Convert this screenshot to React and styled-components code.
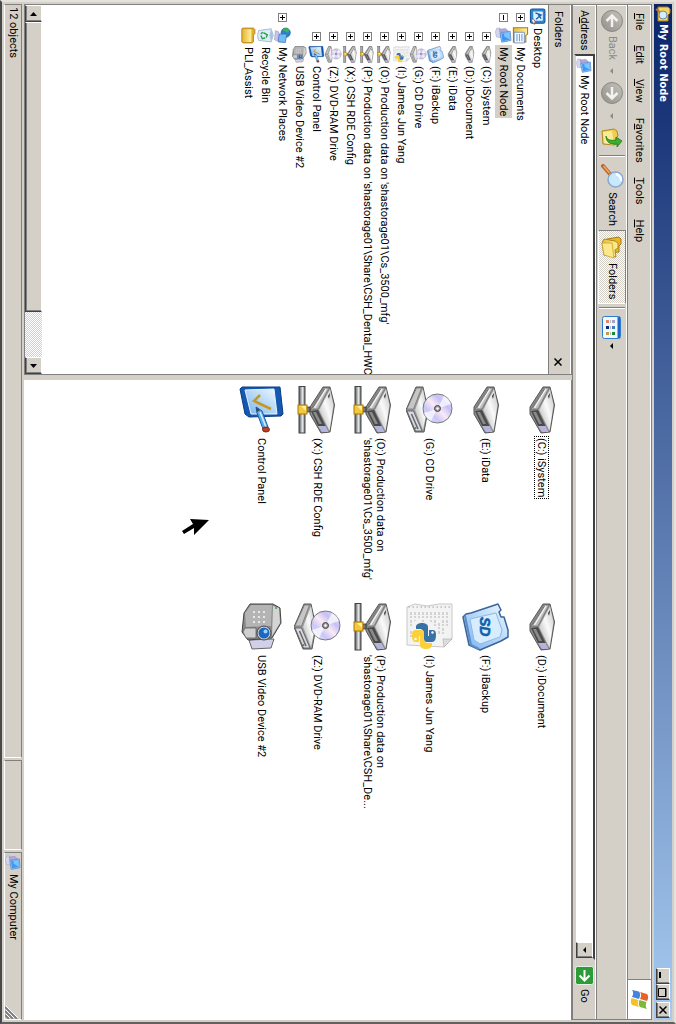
import React from "react";
import styled, { createGlobalStyle, css } from "styled-components";

const face = "#d4d0c8";
const shadow = "#808080";
const dark = "#404040";
const light = "#ffffff";

const raised = css`
  border: 1px solid;
  border-color: ${light} ${dark} ${dark} ${light};
  box-shadow: inset -1px -1px 0 ${shadow};
`;

const dither = css`
  background: repeating-conic-gradient(${face} 0 25%, #fff 0 50%) 0 0 / 2px 2px;
`;

const GlobalStyle = createGlobalStyle`
  *, *::before, *::after { box-sizing: border-box; }
  body { margin: 0; background: ${face}; }
  body, button, input { font: 11px/14px Roboto, Tahoma, sans-serif; color: #000; }
  button { padding: 0; border: 0; background: none; }
  ul { margin: 0; padding: 0; list-style: none; }
  svg { display: block; flex: none; }
`;

const Viewport = styled.div`
  height: 100vh;
  overflow: hidden;
`;

/* The desktop is shown on a display turned a quarter clockwise. */
const Screen = styled.div`
  width: 100vh;
  height: 100vw;
  transform-origin: 0 0;
  transform: rotate(90deg) translateY(-100%);
`;

const Window = styled.div`
  display: flex;
  flex-direction: column;
  height: 100%;
  padding: 2px;
  background: ${face};
  border: 2px solid;
  border-color: #e4e2dc #606060 #484848 #e4e2dc;
`;
const Bar = styled.div`
  display: flex;
  align-items: center;
  flex: none;
`;

const TitleBar = styled(Bar)`
  height: 18px;
  margin-bottom: 2px;
  padding: 0 2px;
  gap: 2px;
  color: #fff;
  font-family: "DejaVu Sans Condensed", Tahoma, sans-serif;
  font-weight: bold;
  background: linear-gradient(90deg, #0a246a, #a6caf0);
`;
const Title = styled.span`
  flex: 1;
`;
const Caption = styled.div`
  display: flex;
`;
const CaptionButton = styled.button`
  ${raised}
  display: grid;
  place-items: center;
  width: 16px;
  height: 14px;
  margin-left: ${(p) => (p.$apart ? "2px" : "0")};
  background: ${face};
`;

const MenuBar = styled(Bar)`
  height: 25px;
  gap: 1px;
  padding-left: 1px;
  border: 1px solid ${shadow};
  box-shadow: inset 1px 1px 0 ${light};
`;
const MenuButton = styled.button`
  padding: 0 7px;
  height: 20px;
`;
const Spacer = styled.div`
  flex: 1;
`;
const LogoBox = styled.div`
  display: grid;
  place-items: center;
  width: 40px;
  height: 100%;
  background: #fff;
  border-left: 1px solid ${shadow};
`;

const ToolBar = styled(Bar)`
  height: 31px;
  padding-left: 1px;
  border: 1px solid ${shadow};
  border-top: 0;
  box-shadow: inset 1px 1px 0 ${light};
`;
const ToolButton = styled.button`
  display: flex;
  align-items: center;
  gap: 4px;
  height: 28px;
  padding: 0 4px;
  color: ${(p) => (p.disabled ? "#8c8a84" : "#000")};
  ${(p) =>
    p.$pressed &&
    css`
      ${dither}
      border: 1px solid;
      border-color: ${shadow} ${light} ${light} ${shadow};
    `}
`;
const Arrow = styled.span`
  margin: 0 ${(p) => p.$gap || 0}px;
  border: 3px solid transparent;
  border-top-color: ${(p) => (p.$dim ? "#8c8a84" : "#000")};
  border-bottom: 0;
`;
const Separator = styled.div`
  width: 2px;
  height: 26px;
  margin: 0 3px;
  border-left: 1px solid ${shadow};
  border-right: 1px solid ${light};
`;

const AddressBar = styled(Bar)`
  height: 24px;
  padding-left: 5px;
  border: 1px solid ${shadow};
  border-top: 0;
  box-shadow: inset 1px 1px 0 ${light};
`;
const AddressLabel = styled.label`
  width: 44px;
`;
const Combo = styled.div`
  display: flex;
  align-items: center;
  flex: 1;
  height: 21px;
  padding-left: 2px;
  gap: 1px;
  background: #fff;
  border: 2px solid;
  border-color: ${dark} ${face} ${face} ${dark};
`;
const AddressInput = styled.input`
  flex: 1;
  min-width: 0;
  padding: 0;
  border: 0;
  outline: 0;
  background: none;
`;
const DropButton = styled.button`
  ${raised}
  display: grid;
  place-items: center;
  width: 16px;
  height: 17px;
  background: ${face};
`;
const GoButton = styled.button`
  display: flex;
  align-items: center;
  gap: 4px;
  width: 59px;
  padding-left: 6px;
`;

const Main = styled.main`
  display: flex;
  flex: 1;
  min-height: 0;
`;
const Folders = styled.section`
  display: flex;
  flex-direction: column;
  width: 371px;
  min-width: 0;
  border: 1px solid ${shadow};
  margin-right: 5px;
`;
const FoldersHead = styled.header`
  display: flex;
  align-items: center;
  justify-content: space-between;
  height: 23px;
  padding: 2px 6px 0;
  background: ${face};
  border-top: 1px solid ${light};
  border-bottom: 1px solid ${shadow};
`;
const CloseButton = styled.button`
  display: grid;
  place-items: center;
  width: 12px;
  height: 12px;
`;
const Tree = styled.ul`
  flex: 1;
  min-height: 0;
  padding: 2px 0;
  background: #fff;
  overflow: hidden;
`;
const TreeRow = styled.li`
  display: flex;
  align-items: center;
  height: 17px;
  padding-left: ${(p) => 3 + Math.max(0, p.$level - 1) * 19}px;
  white-space: nowrap;
`;
const Expander = styled.button`
  display: grid;
  place-items: center;
  width: 9px;
  height: 9px;
  margin: 0 5px;
  flex: none;
  border: 1px solid ${shadow};
  visibility: ${(p) => (p.$none ? "hidden" : "visible")};
`;
const TreeLabel = styled.span`
  height: 17px;
  line-height: 17px;
  margin-left: 1px;
  padding: 0 2px;
  background: ${(p) => (p.$selected ? face : "none")};
`;

const ScrollBar = styled.div`
  display: flex;
  height: 17px;
  flex: none;
  ${dither}
`;
const ScrollButton = styled.button`
  ${raised}
  display: grid;
  place-items: center;
  width: 17px;
  background: ${face};
`;
const Thumb = styled.div`
  ${raised}
  width: 290px;
  background: ${face};
`;
const Track = styled.div`
  flex: 1;
`;

const Items = styled.section`
  position: relative;
  flex: 1;
  min-width: 0;
  display: grid;
  grid-template-columns: 217px 217px;
  grid-auto-rows: 56px;
  align-content: start;
  padding: 1px 0 0 6px;
  background: #fff;
  border-top: 1px solid ${shadow};
`;
const Item = styled.div`
  display: flex;
  align-items: center;
  gap: 3px;
`;
const ItemLabel = styled.span`
  padding: 0 1px;
  line-height: 13px;
  white-space: nowrap;
  outline: ${(p) => (p.$focused ? "1px dotted #000" : "none")};
`;
const Line = styled.span`
  display: block;
`;
const Pointer = styled.svg`
  position: absolute;
  left: 139px;
  top: 362px;
`;

const StatusBar = styled.footer`
  display: flex;
  flex: none;
  gap: 2px;
  height: 20px;
  padding-top: 2px;
`;
const StatusCell = styled.div`
  display: flex;
  align-items: center;
  gap: 3px;
  width: ${(p) => (p.$width ? `${p.$width}px` : "auto")};
  flex: ${(p) => (p.$width ? "none" : 1)};
  padding-left: 2px;
  border: 1px solid;
  border-color: ${shadow} ${light} ${light} ${shadow};
`;

/* ---------- drawings ---------- */

const Gradients = styled.svg`
  position: absolute;
`;
const Defs = () => (
  <Gradients width="0" height="0" aria-hidden="true">
    <defs>
      <linearGradient id="metal" x1="0" y1="0" x2="1" y2="1">
        <stop offset="0" stopColor="#c2c2c2" />
        <stop offset=".45" stopColor="#fafafa" />
        <stop offset="1" stopColor="#a8a8a8" />
      </linearGradient>
      <linearGradient id="disc" x1="0" y1="0" x2="1" y2="1">
        <stop offset="0" stopColor="#f4f2ff" />
        <stop offset=".3" stopColor="#c4c0f4" />
        <stop offset=".5" stopColor="#fbeaf6" />
        <stop offset=".7" stopColor="#c8c6f8" />
        <stop offset="1" stopColor="#f6f6ff" />
      </linearGradient>
      <linearGradient id="sky" x1="0" y1="0" x2="1" y2="1">
        <stop offset="0" stopColor="#eef8ff" />
        <stop offset="1" stopColor="#7ab4ee" />
      </linearGradient>
      <linearGradient id="gold" x1="0" y1="0" x2="0" y2="1">
        <stop offset="0" stopColor="#fff2a0" />
        <stop offset="1" stopColor="#e6b83a" />
      </linearGradient>
      <linearGradient id="pipe" x1="0" y1="0" x2="0" y2="1">
        <stop offset="0" stopColor="#666" />
        <stop offset=".4" stopColor="#e4e8ec" />
        <stop offset="1" stopColor="#555" />
      </linearGradient>
      <linearGradient id="orb" x1="0" y1="0" x2="1" y2="1">
        <stop offset="0" stopColor="#c4c2bc" />
        <stop offset="1" stopColor="#92908a" />
      </linearGradient>
    </defs>
  </Gradients>
);

const DriveBody = () => (
  <g>
    <path d="M1 5 19 0.5 46 5 47 14 28 25 21 25 1 12Z" fill="#8d8d8d" stroke="#555" strokeWidth="1" strokeLinejoin="round" />
    <path d="M3 5 19 1.500 45 5.500 24 16Z" fill="url(#metal)" />
    <path d="M2 6 23 17 23 24 2 11Z" fill="#bdbdbd" stroke="#666" strokeWidth=".6" />
    <path d="M3 9 22 20.500" stroke="#f4f4f4" strokeWidth="1.400" />
    <path d="M3 10.500 22 22.500" stroke="#5e5e5e" strokeWidth=".8" />
    <path d="M24 17 40 9.500 40 17 25 24Z" fill="#4a4a4a" />
    <path d="M26 19 38 13 38 16 26 22Z" fill="#8a8a8a" />
    <path d="M40 9.500 46 6.500 46 13 40 17Z" fill="#b4b4dc" />
    <path d="M7 4.800 13 6 10 7Z" fill="#333" />
  </g>
);

const Drive = () => (
  <g transform="translate(0 11)">
    <DriveBody />
  </g>
);

const NetDrive = () => (
  <g transform="translate(0 7)">
    <DriveBody />
    <path d="M21 25h5v5h-5z" fill="#777" stroke="#333" strokeWidth=".8" />
    <rect x=".5" y="30" width="46.500" height="6" fill="url(#pipe)" stroke="#444" />
    <rect x="19" y="28" width="9" height="9" fill="#f4c838" stroke="#a87808" />
    <path d="M20 29h5l-5 5z" fill="#fff0a8" />
  </g>
);

const CdDrive = () => (
  <g transform="translate(0 1)">
    <g transform="translate(0 22)">
      <path d="M1 8 24 3 46 7 46 16 24 25 1 15Z" fill="#9a9a9a" stroke="#555" strokeLinejoin="round" />
      <path d="M3 8 24 4 44 8 24 16Z" fill="url(#metal)" />
      <path d="M2 9.500 23 17.500 23 24 2 14.500Z" fill="#c6c6c6" stroke="#666" strokeWidth=".6" />
      <path d="M25 17.500 45 9 45 15.500 25 24Z" fill="#d8d8e4" stroke="#555" strokeWidth=".8" />
      <path d="M28 19.500 43 13" stroke="#666" strokeWidth="1.500" />
      <circle cx="42" cy="15.500" r="1" fill="#2f9a3a" />
    </g>
    <circle cx="22.500" cy="15.500" r="14.500" fill="url(#disc)" stroke="#777" />
    <path d="M22.500 15.500 10 9A14 14 0 0 1 18 2Z" fill="#fff" opacity=".7" />
    <path d="M22.500 15.500 35 22A14 14 0 0 1 27 29Z" fill="#fff" opacity=".7" />
    <circle cx="22.500" cy="15.500" r="3" fill="#999" stroke="#444" />
    <circle cx="22.500" cy="15.500" r="1.200" fill="#fff" />
  </g>
);

const SdCard = () => (
  <g transform="translate(0 1)">
    <path d="M1 11 7 8 9 10 14 8 14 5 27 1 34 1 38 8 47 29 42 40 14 46 11 43 10 38Z" fill="url(#sky)" stroke="#3a649c" strokeWidth="1.500" strokeLinejoin="round" />
    <path d="M10 13 27 7 34 9 41 29 37 35 16 39Z" fill="#d8ecff" stroke="#8cb8e8" />
    <path d="M13 44 42 38 46 30" fill="none" stroke="#5b8cc8" strokeWidth="2" />
    <text x="14" y="29" fontFamily="Liberation Sans, sans-serif" fontSize="14" fontWeight="bold" fontStyle="italic" fill="#1060a8" stroke="#1060a8" strokeWidth=".6">SD</text>
  </g>
);

const PythonPaper = () => (
  <g transform="translate(0 1)">
    <path d="M1 1 36 1 44 9 42 46 4 46 1 38 3 26 1 14Z" fill="#f3f3f3" stroke="#c8c8c8" />
    <path d="M36 1 36 10 44 9Z" fill="#ddd" stroke="#aaa" strokeWidth=".6" />
    <path d="M4 3V45" stroke="#bbb" strokeWidth="1.500" strokeDasharray="1.500 2.500" />
    <path d="M9 6h14M9 10h22M9 14h8M20 14h12M9 18h16M9 22h10M9 26h8M9 30h10M9 34h6M9 38h9M9 42h14M28 42h8" stroke="#b4b4b4" strokeDasharray="3 1 2 2" />
    <path d="M32 17c-5 0-5 2-5 4v3h6v1h-9c-3 0-4 3-4 6s1 6 4 6h2v-4c0-2 2-4 4-4h6c2 0 3-1 3-3v-5c0-3-3-4-7-4z" fill="#3872a4" />
    <path d="M33 41c5 0 6-2 6-4v-3h-6v-1h9c3 0 4-3 4-6s-1-6-4-6h-2v4c0 2-2 4-4 4h-6c-2 0-3 1-3 3v5c0 3 2 4 6 4z" fill="#fdd03a" />
    <circle cx="29.500" cy="20.500" r="1.200" fill="#fff" />
    <circle cx="36" cy="37.500" r="1.200" fill="#fff" />
  </g>
);

const ControlPanel = () => (
  <g transform="translate(0 2)">
    <path d="M1 4 28 1 30 3 31 35 28 39 3 44 1 42Z" fill="#1458b0" stroke="#0c3c84" strokeLinejoin="round" />
    <path d="M3 10 28 7 28 33 4 39Z" fill="url(#sky)" stroke="#e8f4ff" />
    <path d="M9 24 15 30 23 13" fill="none" stroke="#c8981c" strokeWidth="2.500" />
    <path d="M21 28 25 22 41 16 43 21 27 27Z" fill="#5cacec" stroke="#1c5ca4" />
    <path d="M26 24 41 18" stroke="#d4f0ff" strokeWidth="1.500" />
    <path d="M21 28 24 24 26 27Z" fill="#444" />
    <ellipse cx="43.500" cy="18" rx="2.500" ry="3.500" fill="#c43c20" stroke="#7c2410" />
  </g>
);

const Camera = () => (
  <g transform="translate(0 4)">
    <path d="M36 8 45 11 46 30 37 33Z" fill="#d0d0e8" stroke="#666" />
    <path d="M1 9 5 2 20 1 35 10 37 34 29 40 10 38 1 32Z" fill="#8a8a8a" stroke="#444" strokeLinejoin="round" />
    <path d="M2 10 23 11 24 36 10 37 2 31Z" fill="#b4b4b4" />
    <path d="M5 3 20 2 33 10 3 9Z" fill="#d4d4d4" />
    <path d="M25 26H35V36L29 39 25 37Z" fill="#cfcfcf" stroke="#555" strokeWidth=".7" />
    <path d="M8 18h13M8 23h13M8 28h13" stroke="#e8e8e8" strokeWidth="2" strokeDasharray="2 3" />
    <circle cx="30" cy="18" r="7" fill="#d4d4d4" stroke="#444" />
    <circle cx="30" cy="18" r="5.500" fill="#1c68c0" />
    <circle cx="28.500" cy="16.500" r="2" fill="#9cd4ff" />
    <circle cx="5" cy="6" r="1" fill="#2fa840" />
  </g>
);

const Computer = () => (
  <g>
    <path d="M3 34 18 29 30 33 28 44 14 47 3 43Z" fill="#d4d6ec" stroke="#8088b4" />
    <path d="M4 18 12 10 15 34 6 36Z" fill="#b0a8d8" stroke="#7878b0" />
    <path d="M12 5 38 3 43 29 17 34Z" fill="#a4ccf4" stroke="#4878c8" strokeWidth="2" />
    <path d="M15 8 36 6 40 27 19 30Z" fill="#3c98f0" />
    <path d="M15 8 36 6 26 22 18 23Z" fill="#7cc4ff" />
  </g>
);

const Desktop = () => (
  <g>
    <rect x="3" y="3" width="40" height="41" rx="5" fill="#2e86d0" stroke="#14559c" strokeWidth="3" />
    <rect x="10" y="9" width="26" height="27" rx="2" fill="#dff0ff" />
    <path d="M14 30 20 14 32 28M18 22l12-8" fill="none" stroke="#1c64b4" strokeWidth="4" />
    <path d="M30 36l12-8 4 6-12 8z" fill="#f0f0f0" stroke="#555" strokeWidth="2" />
    <circle cx="43" cy="31" r="3" fill="#d04020" />
  </g>
);

const Documents = () => (
  <g>
    <path d="M2 4H20L24 9H42V44H2Z" fill="url(#gold)" stroke="#a87818" strokeWidth="3" />
    <path d="M15 13H45V42H15Z" fill="#f4f8ff" stroke="#5878a8" strokeWidth="2" />
    <path d="M20 20H40M20 27H40M20 34H40" stroke="#70a0d8" strokeWidth="3" />
  </g>
);

const Network = () => (
  <g>
    <circle cx="16" cy="15" r="13" fill="#2484d4" stroke="#14589c" strokeWidth="2" />
    <path d="M8 5c8 0 10 5 6 9s-2 8-6 10C2 20 2 8 8 5zM20 16l8-4-2 12z" fill="#3cb450" />
    <path d="M20 12 44 16 42 36 20 34Z" fill="#74bcf8" stroke="#3868b0" strokeWidth="2" />
    <path d="M14 34 40 38 36 47 10 44Z" fill="#c8c4ec" stroke="#7474b0" />
  </g>
);

const Recycle = () => (
  <g>
    <path d="M5 8 24 2 42 8 38 43 24 47 10 43Z" fill="#dcecf8" stroke="#88a8c8" strokeWidth="2" />
    <path d="M5 8 24 13 42 8 24 3Z" fill="#a8c4dc" />
    <path d="M16 30 22 19 30 22M31 25 33 33 24 37M20 37 15 32" fill="none" stroke="#28a048" strokeWidth="4" />
  </g>
);

const Folder = () => (
  <g>
    <path d="M3 10 7 6H19L23 10H42L45 14V39L42 43H5L3 40Z" fill="#e4b030" stroke="#9c7010" strokeWidth="2" />
    <path d="M6 16H42V40H6Z" fill="url(#gold)" />
  </g>
);

const art = {
  drive: Drive,
  net: NetDrive,
  cd: CdDrive,
  sd: SdCard,
  python: PythonPaper,
  control: ControlPanel,
  camera: Camera,
  computer: Computer,
  desktop: Desktop,
  documents: Documents,
  network: Network,
  recycle: Recycle,
  folder: Folder,
};

function Art({ name, size }) {
  const Drawing = art[name];
  return (
    <svg width={size} height={size} viewBox="0 0 48 48" aria-hidden="true">
      <Drawing />
    </svg>
  );
}

const Orb = ({ flip }) => (
  <svg width="22" height="22" viewBox="0 0 22 22" aria-hidden="true">
    <circle cx="11" cy="11" r="10.500" fill="url(#orb)" stroke="#8a8882" />
    <g transform={flip ? "rotate(180 11 11)" : undefined}>
      <path d="M17 11H6M11 5.500 5.500 11 11 16.500" fill="none" stroke="#f4f2ee" strokeWidth="2.500" />
    </g>
  </svg>
);

const UpFolder = () => (
  <svg width="20" height="22" viewBox="0 0 20 22" aria-hidden="true">
    <path d="M1 9 3 6 8 5 10 7 17 8 16 20 3 21Z" fill="#f0cc50" stroke="#b08820" />
    <path d="M3 11 17 9 15 19 4 20Z" fill="#fbeb98" />
    <path d="M8 17c4-1 5-5 4-10H9L13 1l6 5h-3c1 7-2 11-8 11z" fill="#3fae30" stroke="#1f7a18" strokeWidth=".8" />
  </svg>
);

const Magnifier = () => (
  <svg width="24" height="24" viewBox="0 0 24 24" aria-hidden="true">
    <path d="M2 21 10 14" stroke="#b86830" strokeWidth="4" strokeLinecap="round" />
    <path d="M2 20.500 9 14.500" stroke="#f0a868" strokeWidth="1.500" />
    <circle cx="15.500" cy="8.500" r="7.500" fill="#c8e8fc" stroke="#88a8d0" strokeWidth="1.500" />
    <path d="M10 8a6 6 0 0 1 7-5" fill="none" stroke="#fff" strokeWidth="2.500" />
  </svg>
);

const FoldersIcon = () => (
  <svg width="24" height="22" viewBox="0 0 24 22" aria-hidden="true">
    <path d="M2 4 4 2H9L11 4H17L18 15 4 16Z" fill="#e8b828" stroke="#a87c10" />
    <path d="M6 8 8 5H13L15 8 22 7 20 19 8 21 4 19Z" fill="url(#gold)" stroke="#b08818" />
    <path d="M8 11 23 9 20 19 8 21Z" fill="#fbe888" stroke="#c89c28" strokeWidth=".7" />
  </svg>
);

const ViewsIcon = () => (
  <svg width="23" height="19" viewBox="0 0 23 19" aria-hidden="true">
    <rect x=".5" y=".5" width="22" height="18" rx="2" fill="#f2f8ff" stroke="#2c7cd0" />
    <path d="M1 1H22V3.500H1Z" fill="#1c68c8" />
    <path d="M4 6h3v3H4z" fill="#a8a0cc" />
    <path d="M10 6h3v3h-3z" fill="#3c80b8" />
    <path d="M16 6h3v3h-3z" fill="#148c2c" />
    <path d="M4 12h3v3H4z" fill="#e08868" />
    <path d="M10 12h3v3h-3z" fill="#102c70" />
    <path d="M16 12h3v3h-3z" fill="#b8a040" />
    <path d="M4 10.500h3M10 10.500h3M16 10.500h3" stroke="#b8bcc4" />
  </svg>
);

const Flag = () => (
  <svg width="20" height="19" viewBox="0 0 20 19" aria-hidden="true">
    <path d="M4 2c3-2 5-1 7 0L9 9C7 8 5 7 2 9z" fill="#e4642c" />
    <path d="M12 2.500c3 1 5 1 7-.5l-2 7c-2 1.500-4 1.500-7 .500z" fill="#7cb83c" />
    <path d="M1.500 10c3-2 5-1 7.500 0L7 17C5 16 3 15 0 17z" fill="#4484dc" />
    <path d="M10 10.500c3 1 5 1 7-.5l-2 7c-2 1.500-4 1.500-7 .5z" fill="#f4c02c" />
  </svg>
);

const GoIcon = () => (
  <svg width="19" height="19" viewBox="0 0 19 19" aria-hidden="true">
    <rect x=".5" y=".5" width="18" height="18" rx="2" fill="#2f9a38" stroke="#e4f4e4" />
    <path d="M4 9.500H14M9.500 4.500 14.500 9.500 9.500 14.500" fill="none" stroke="#fff" strokeWidth="2" />
  </svg>
);

const WindowIcon = () => (
  <svg width="16" height="16" viewBox="0 0 16 16" aria-hidden="true">
    <path d="M1 3 3 1H7L9 3H15V13H1Z" fill="#f4d460" stroke="#a8801c" />
    <circle cx="9" cy="8" r="4" fill="#d4ecfc" stroke="#6c8cb0" />
    <path d="M6 11 3 15" stroke="#c07038" strokeWidth="2" />
  </svg>
);

const Cross = ({ size }) => (
  <svg width={size} height={size} viewBox="0 0 8 8" aria-hidden="true">
    <path d="M.5.5 7.500 7.500M7.500.5.5 7.500" stroke="#000" strokeWidth="1.500" />
  </svg>
);

const Sign = ({ open }) => (
  <svg width="5" height="5" viewBox="0 0 5 5" aria-hidden="true">
    <path d={open ? "M0 2.500H5" : "M0 2.500H5M2.500 0V5"} stroke="#000" />
  </svg>
);

const Triangle = ({ left }) => (
  <svg width="4" height="7" viewBox="0 0 4 7" aria-hidden="true">
    <path d={left ? "M4 0V7L0 3.500Z" : "M0 0V7L4 3.500Z"} />
  </svg>
);

const GripMark = styled.svg`
  margin-left: auto;
  align-self: flex-end;
`;
const Grip = () => (
  <GripMark width="13" height="13" viewBox="0 0 13 13" aria-hidden="true">
    <path d="M1 13 13 1M5 13 13 5M9 13 13 9" stroke="#808080" strokeWidth="2" />
    <path d="M0 12 12 0M4 12 12 4M8 12 12 8" stroke="#fff" />
  </GripMark>
);

/* ---------- data ---------- */

const menus = ["_File", "_Edit", "_View", "F_avorites", "_Tools", "_Help"];

const tree = [
  { level: 0, icon: "desktop", text: "Desktop" },
  { level: 1, icon: "documents", text: "My Documents", sign: "+" },
  { level: 1, icon: "computer", text: "My Root Node", sign: "-", selected: true },
  { level: 2, icon: "drive", text: "(C:) iSystem", sign: "+" },
  { level: 2, icon: "drive", text: "(D:) iDocument", sign: "+" },
  { level: 2, icon: "drive", text: "(E:) iData", sign: "+" },
  { level: 2, icon: "sd", text: "(F:) iBackup", sign: "+" },
  { level: 2, icon: "cd", text: "(G:) CD Drive", sign: "+" },
  { level: 2, icon: "python", text: "(I:) James Jun Yang", sign: "+" },
  { level: 2, icon: "net", text: "(O:) Production data on 'shastorage01\\Cs_3500_mfg'", sign: "+" },
  { level: 2, icon: "net", text: "(P:) Production data on 'shastorage01\\Share\\CSH_Dental_HWC", sign: "+" },
  { level: 2, icon: "net", text: "(X:) CSH RDE Config", sign: "+" },
  { level: 2, icon: "cd", text: "(Z:) DVD-RAM Drive", sign: "+" },
  { level: 2, icon: "control", text: "Control Panel", sign: "+" },
  { level: 2, icon: "camera", text: "USB Video Device #2" },
  { level: 1, icon: "network", text: "My Network Places", sign: "+" },
  { level: 1, icon: "recycle", text: "Recycle Bin" },
  { level: 1, icon: "folder", text: "PLI_Assist" },
];

const items = [
  { icon: "drive", lines: ["(C:) iSystem"], focused: true },
  { icon: "drive", lines: ["(D:) iDocument"] },
  { icon: "drive", lines: ["(E:) iData"] },
  { icon: "sd", lines: ["(F:) iBackup"] },
  { icon: "cd", lines: ["(G:) CD Drive"] },
  { icon: "python", lines: ["(I:) James Jun Yang"] },
  { icon: "net", lines: ["(O:) Production data on", "'shastorage01\\Cs_3500_mfg'"] },
  { icon: "net", lines: ["(P:) Production data on", "'shastorage01\\Share\\CSH_De..."] },
  { icon: "net", lines: ["(X:) CSH RDE Config"] },
  { icon: "cd", lines: ["(Z:) DVD-RAM Drive"] },
  { icon: "control", lines: ["Control Panel"] },
  { icon: "camera", lines: ["USB Video Device #2"] },
];

function Mnemonic({ text }) {
  const at = text.indexOf("_");
  return (
    <span>
      {text.slice(0, at)}
      <u>{text[at + 1]}</u>
      {text.slice(at + 2)}
    </span>
  );
}

export default function App() {
  return (
    <Viewport>
      <GlobalStyle />
      <Defs />
      <Screen>
        <Window>
          <TitleBar>
            <WindowIcon />
            <Title>My Root Node</Title>
            <Caption>
              <CaptionButton aria-label="Minimize">
                <svg width="8" height="8"><path d="M0 6H6V8H0Z" /></svg>
              </CaptionButton>
              <CaptionButton aria-label="Maximize">
                <svg width="9" height="9"><path d="M.5 1H8.500V8.500H.5ZM.5 1.500H8.500" fill="none" stroke="#000" /></svg>
              </CaptionButton>
              <CaptionButton aria-label="Close" $apart>
                <Cross size={8} />
              </CaptionButton>
            </Caption>
          </TitleBar>

          <MenuBar as="nav">
            {menus.map((m) => (
              <MenuButton key={m}>
                <Mnemonic text={m} />
              </MenuButton>
            ))}
            <Spacer />
            <LogoBox>
              <Flag />
            </LogoBox>
          </MenuBar>

          <ToolBar>
            <ToolButton disabled>
              <Orb />
              Back
            </ToolButton>
            <Arrow $dim $gap={4} />
            <ToolButton disabled aria-label="Forward">
              <Orb flip />
            </ToolButton>
            <Arrow $dim $gap={5} />
            <ToolButton aria-label="Up">
              <UpFolder />
            </ToolButton>
            <Separator />
            <ToolButton>
              <Magnifier />
              Search
            </ToolButton>
            <ToolButton $pressed aria-pressed="true">
              <FoldersIcon />
              Folders
            </ToolButton>
            <Separator />
            <ToolButton aria-label="Views">
              <ViewsIcon />
              <Arrow />
            </ToolButton>
          </ToolBar>

          <AddressBar>
            <AddressLabel htmlFor="address">
              <Mnemonic text="A_ddress" />
            </AddressLabel>
            <Combo>
              <Art name="computer" size={16} />
              <AddressInput id="address" defaultValue="My Root Node" />
              <DropButton aria-label="Show addresses">
                <Arrow />
              </DropButton>
            </Combo>
            <GoButton>
              <GoIcon />
              Go
            </GoButton>
          </AddressBar>

          <Main>
            <Folders>
              <FoldersHead>
                Folders
                <CloseButton aria-label="Close folders">
                  <Cross size={8} />
                </CloseButton>
              </FoldersHead>
              <Tree>
                {tree.map((n) => (
                  <TreeRow key={n.text} $level={n.level}>
                    {n.level > 0 && (
                      <Expander $none={!n.sign} aria-label={`Toggle ${n.text}`}>
                        <Sign open={n.sign === "-"} />
                      </Expander>
                    )}
                    <Art name={n.icon} size={17} />
                    <TreeLabel $selected={n.selected}>{n.text}</TreeLabel>
                  </TreeRow>
                ))}
              </Tree>
              <ScrollBar>
                <ScrollButton aria-label="Scroll left">
                  <Triangle left />
                </ScrollButton>
                <Thumb />
                <Track />
                <ScrollButton aria-label="Scroll right">
                  <Triangle />
                </ScrollButton>
              </ScrollBar>
            </Folders>

            <Items>
              {items.map((it) => (
                <Item key={it.lines[0]}>
                  <Art name={it.icon} size={48} />
                  <ItemLabel $focused={it.focused}>
                    {it.lines.map((l) => (
                      <Line key={l}>{l}</Line>
                    ))}
                  </ItemLabel>
                </Item>
              ))}
              <Pointer width="18" height="28" viewBox="0 0 18 28" aria-hidden="true">
                <path d="M1 0 0 19 5 16 12 27 15 25 9 15 16 15Z" />
              </Pointer>
            </Items>
          </Main>

          <StatusBar>
            <StatusCell>12 objects</StatusCell>
            <StatusCell $width={90}>{""}</StatusCell>
            <StatusCell $width={168}>
              <Art name="computer" size={16} />
              My Computer
              <Grip />
            </StatusCell>
          </StatusBar>
        </Window>
      </Screen>
    </Viewport>
  );
}
